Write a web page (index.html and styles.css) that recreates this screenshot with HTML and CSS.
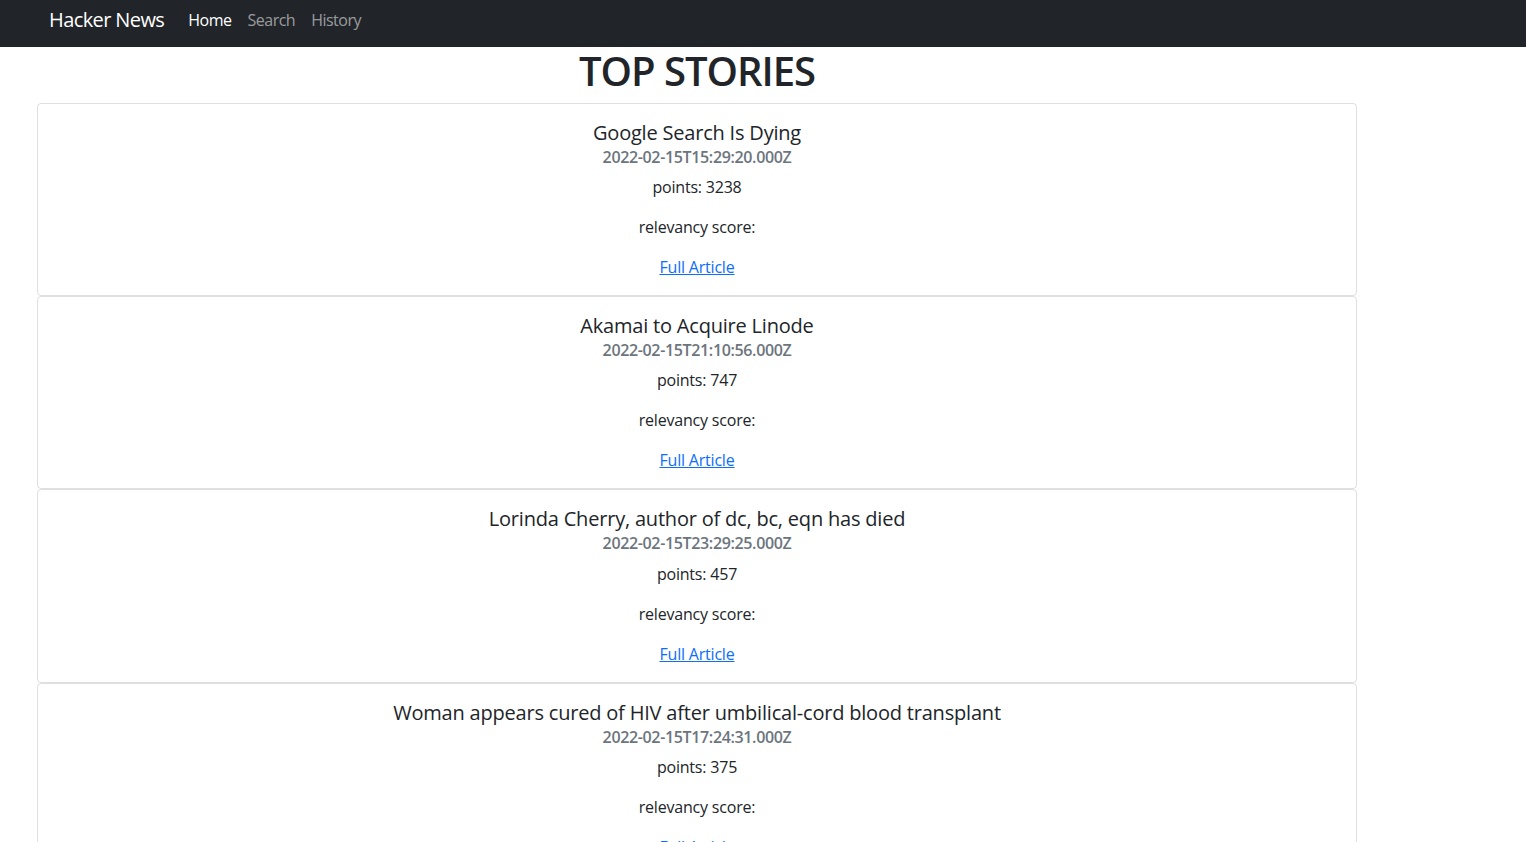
FILE: index.html
```html
<!DOCTYPE html>
<html lang="en">
<head>
<meta charset="utf-8">
<title>Hacker News</title>
<link rel="stylesheet" href="styles.css">
</head>
<body>
<nav class="navbar">
  <a class="brand" href="#">Hacker News</a>
  <ul class="nav">
    <li><a class="nav-link active" href="#">Home</a></li>
    <li><a class="nav-link" href="#">Search</a></li>
    <li><a class="nav-link" href="#">History</a></li>
  </ul>
</nav>
<main class="stories">
  <h1 class="page-title">TOP STORIES</h1>
  <div class="card">
    <h5 class="card-title">Google Search Is Dying</h5>
    <h6 class="card-subtitle">2022-02-15T15:29:20.000Z</h6>
    <p class="card-text">points: 3238</p>
    <p class="card-text">relevancy score: </p>
    <a class="card-link" href="#">Full Article</a>
  </div>
  <div class="card">
    <h5 class="card-title">Akamai to Acquire Linode</h5>
    <h6 class="card-subtitle">2022-02-15T21:10:56.000Z</h6>
    <p class="card-text">points: 747</p>
    <p class="card-text">relevancy score: </p>
    <a class="card-link" href="#">Full Article</a>
  </div>
  <div class="card">
    <h5 class="card-title">Lorinda Cherry, author of dc, bc, eqn has died</h5>
    <h6 class="card-subtitle">2022-02-15T23:29:25.000Z</h6>
    <p class="card-text">points: 457</p>
    <p class="card-text">relevancy score: </p>
    <a class="card-link" href="#">Full Article</a>
  </div>
  <div class="card">
    <h5 class="card-title">Woman appears cured of HIV after umbilical-cord blood transplant</h5>
    <h6 class="card-subtitle">2022-02-15T17:24:31.000Z</h6>
    <p class="card-text">points: 375</p>
    <p class="card-text">relevancy score: </p>
    <a class="card-link" href="#">Full Article</a>
  </div>
</main>
</body>
</html>
```

FILE: styles.css
```css
* { box-sizing: border-box; }
html, body { margin: 0; padding: 0; }
body {
  font-family: "Open Sans", "Noto Sans", "Liberation Sans", sans-serif;
  font-size: 16px;
  line-height: 1.5;
  color: #212529;
  background: #fff;
  letter-spacing: -0.2px;
}
.navbar {
  display: flex;
  align-items: center;
  height: 47px;
  padding: 0 0 7px 49px;
  background: #212529;
}
.brand {
  font-size: 20px;
  line-height: 30px;
  color: #fff;
  text-decoration: none;
  margin-right: 16px;
  letter-spacing: -0.6px;
}
.nav {
  display: flex;
  list-style: none;
  margin: 0;
  padding: 0;
}
.nav-link {
  display: block;
  padding: 0 8px;
  line-height: 30px;
  color: rgba(255,255,255,.55);
  text-decoration: none;
  letter-spacing: -0.5px;
}
.nav-link.active { color: #fff; }
.stories {
  width: 1320px;
  margin-left: 37px;
}
.page-title {
  margin: 0 0 8px;
  font-size: 40px;
  line-height: 48px;
  font-weight: 600;
  text-align: center;
  letter-spacing: -1px;
}
.card {
  display: flex;
  flex-direction: column;
  align-items: center;
  padding: 16px;
  border: 1px solid rgba(0,0,0,.125);
  border-radius: 4px;
  text-align: center;
}
.card-title {
  margin: 1px 0 7px;
  font-size: 20px;
  line-height: 24px;
  font-weight: 500;
  letter-spacing: -0.2px;
}
.card-subtitle {
  margin: -4px 0 8px;
  font-size: 16px;
  line-height: 19.2px;
  font-weight: 600;
  color: #6c757d;
  letter-spacing: -0.35px;
}
.card-text {
  margin: 0 0 16px;
  line-height: 24px;
}
.card-link {
  line-height: 24px;
  color: #0d6efd;
  text-decoration: underline;
}
```
